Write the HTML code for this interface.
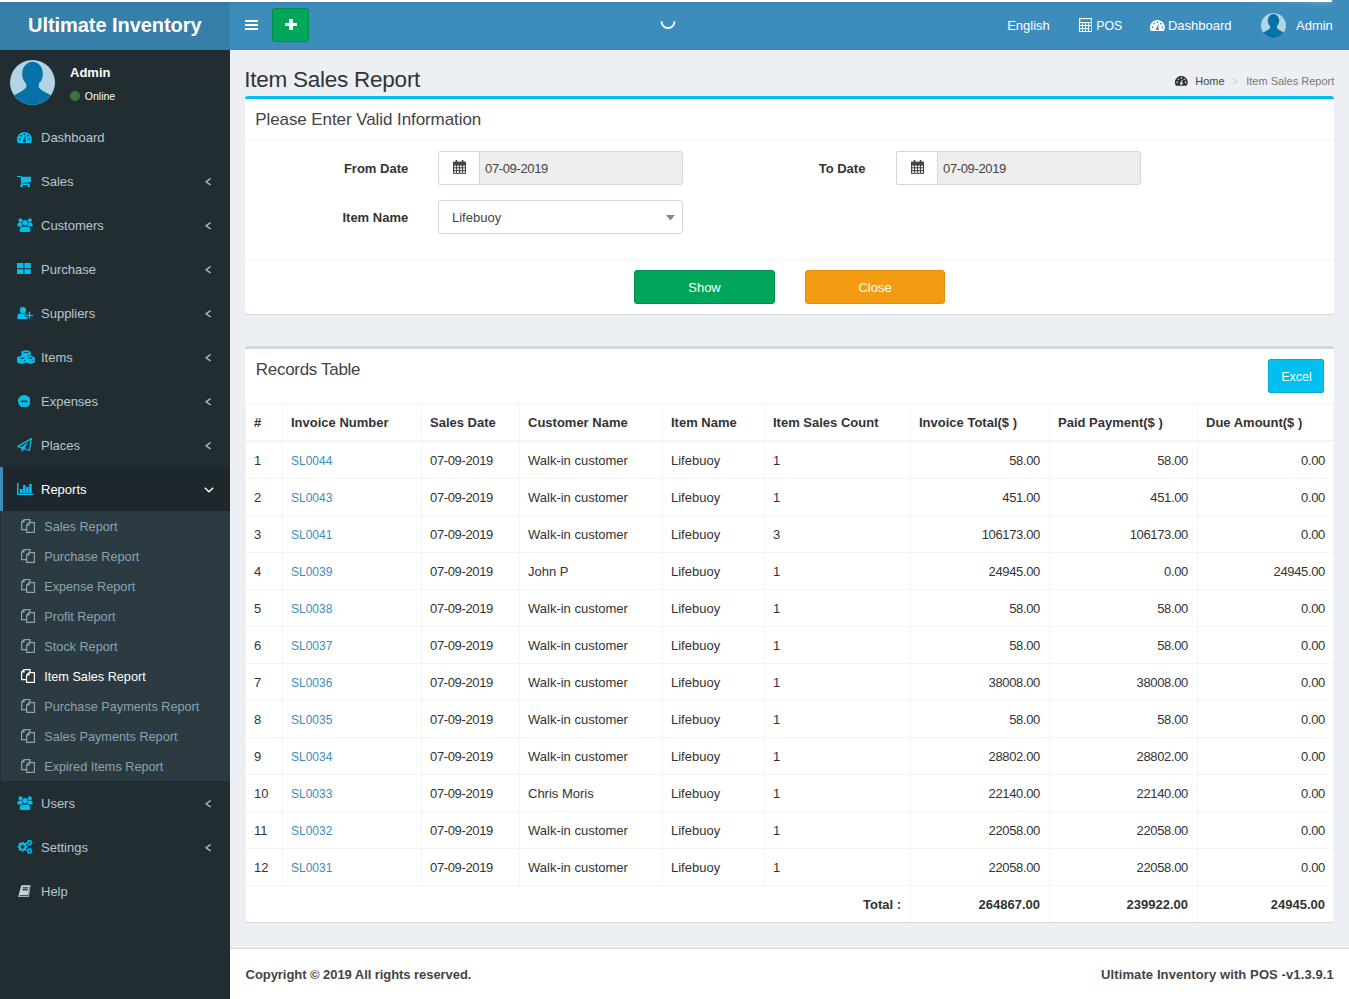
<!DOCTYPE html>
<html><head><meta charset="utf-8"><title>Item Sales Report</title>
<style>
html,body{margin:0;padding:0;width:1349px;height:999px;overflow:hidden;background:#ecf0f5;}
body{position:relative;font-family:"Liberation Sans",sans-serif;}
.t{position:absolute;white-space:nowrap;}
.r{position:absolute;display:block;}
</style></head><body>
<div class="r" style="left:230px;top:50px;width:1119px;height:898px;background:#ecf0f5;"></div>
<div class="r" style="left:0px;top:50px;width:230px;height:949px;background:#222d32;"></div>
<div class="r" style="left:0px;top:0px;width:230px;height:50px;background:#367fa9;"></div>
<div class="r" style="left:230px;top:0px;width:1119px;height:50px;background:#3c8dbc;"></div>
<div class="r" style="left:0px;top:0px;width:1332px;height:2px;background:#ffffff;box-shadow:0 0 4px rgba(40,90,130,.5);"></div>
<div class="r" style="left:1232px;top:0;width:100px;height:2px;box-shadow:0 0 10px #fff,0 0 5px #fff;opacity:.8;transform:rotate(3deg) translate(0,-4px)"></div>
<div class="t" style="left:28px;top:14.77px;font-size:20px;line-height:20px;color:#fff;font-weight:bold;letter-spacing:-0.05px;">Ultimate Inventory</div>
<div class="r" style="left:244.5px;top:20px;width:13.5px;height:2.2px;background:#fff;"></div>
<div class="r" style="left:244.5px;top:24px;width:13.5px;height:2.2px;background:#fff;"></div>
<div class="r" style="left:244.5px;top:28px;width:13.5px;height:2.2px;background:#fff;"></div>
<div class="r" style="left:272px;top:8px;width:35px;height:32px;background:#00a65a;border:1px solid #008d4c;border-radius:3px;"></div>
<div class="r" style="left:284.7px;top:22.8px;width:12px;height:3.6px;background:#fff;"></div>
<div class="r" style="left:289px;top:18.8px;width:3.6px;height:11.4px;background:#fff;"></div>
<svg class="r" style="left:658px;top:12px;" width="20" height="20" viewBox="0 0 20 20"><path d="M3.5 9.5 A6.5 6.5 0 0 0 16.5 9.5" fill="none" stroke="#fff" stroke-width="2"/></svg>
<div class="t" style="left:1007.2px;top:18.99px;font-size:13px;line-height:13px;color:#fff;">English</div>
<svg class="r" style="left:1078.8px;top:17.9px;" width="13.4" height="14.1" viewBox="0 0 13.4 14.1"><rect x="0" y="0" width="13.4" height="14.1" rx="0.8" fill="#fff"/><rect x="1.2" y="1.1" width="11" height="2.9" fill="#3c8dbc"/><rect x="1.1" y="5" width="2.1" height="2.1" fill="#3c8dbc"/><rect x="1.1" y="8" width="2.1" height="2.1" fill="#3c8dbc"/><rect x="1.1" y="11" width="2.1" height="2.1" fill="#3c8dbc"/><rect x="4.1" y="5" width="2.1" height="2.1" fill="#3c8dbc"/><rect x="4.1" y="8" width="2.1" height="2.1" fill="#3c8dbc"/><rect x="4.1" y="11" width="2.1" height="2.1" fill="#3c8dbc"/><rect x="7.1" y="5" width="2.1" height="2.1" fill="#3c8dbc"/><rect x="7.1" y="8" width="2.1" height="2.1" fill="#3c8dbc"/><rect x="7.1" y="11" width="2.1" height="2.1" fill="#3c8dbc"/><rect x="10.2" y="5" width="2.1" height="2.1" fill="#3c8dbc"/><rect x="10.2" y="8" width="2.1" height="5.1" fill="#3c8dbc"/></svg>
<div class="t" style="left:1096.3px;top:19.59px;font-size:12.3px;line-height:12.3px;color:#fff;">POS</div>
<svg class="r" style="left:1150px;top:19.8px;" width="14.8" height="11.4" viewBox="0 0 14.8 11.4"><path d="M1.1 11.3 A7.4 7.4 0 1 1 13.7 11.3 Z" fill="#fff"/><ellipse cx="7.4" cy="2.3" rx="0.75" ry="1.05" fill="#3c8dbc"/><ellipse cx="4" cy="3.8" rx="1.05" ry="0.7" fill="#3c8dbc"/><ellipse cx="10.9" cy="3.8" rx="1.05" ry="0.7" fill="#3c8dbc"/><ellipse cx="2.5" cy="7.3" rx="0.75" ry="1.05" fill="#3c8dbc"/><ellipse cx="12.4" cy="7.3" rx="0.75" ry="1.05" fill="#3c8dbc"/><path d="M8.4 4.7 L7.3 8.6" stroke="#3c8dbc" stroke-width="1.1"/><circle cx="7.4" cy="8.8" r="1.5" fill="#3c8dbc"/></svg>
<div class="t" style="left:1167.9px;top:18.99px;font-size:13px;line-height:13px;color:#fff;">Dashboard</div>
<svg class="r" style="left:1261px;top:13px;" width="25" height="25" viewBox="0 0 100 100"><circle cx="50" cy="50" r="50" fill="#b3d4e5"/><clipPath id="av1"><circle cx="50" cy="50" r="50"/></clipPath><g clip-path="url(#av1)" fill="#0672a8"><ellipse cx="50" cy="31" rx="23" ry="27"/><path d="M36 48 L36 61 Q28 70 11 77 L0 86 L0 110 L100 110 L100 86 L89 77 Q72 70 64 61 L64 48 Z"/></g></svg>
<div class="t" style="left:1296px;top:18.99px;font-size:13px;line-height:13px;color:#fff;">Admin</div>
<svg class="r" style="left:10px;top:60px;" width="45" height="45" viewBox="0 0 100 100"><circle cx="50" cy="50" r="50" fill="#b3d4e5"/><clipPath id="av2"><circle cx="50" cy="50" r="50"/></clipPath><g clip-path="url(#av2)" fill="#0672a8"><ellipse cx="50" cy="31" rx="23" ry="27"/><path d="M36 48 L36 61 Q28 70 11 77 L0 86 L0 110 L100 110 L100 86 L89 77 Q72 70 64 61 L64 48 Z"/></g></svg>
<div class="t" style="left:70px;top:65.99px;font-size:13px;line-height:13px;color:#fff;font-weight:bold;">Admin</div>
<div class="r" style="left:70px;top:91px;width:10px;height:10px;border-radius:50%;background:#3c763d"></div>
<div class="t" style="left:84.8px;top:91.11px;font-size:10.5px;line-height:10.5px;color:#fff;">Online</div>
<svg class="r" style="left:17.3px;top:131.7px;" width="14.8" height="11.4" viewBox="0 0 14.8 11.4"><path d="M1.1 11.3 A7.4 7.4 0 1 1 13.7 11.3 Z" fill="#00c0ef"/><ellipse cx="7.4" cy="2.3" rx="0.75" ry="1.05" fill="#222d32"/><ellipse cx="4" cy="3.8" rx="1.05" ry="0.7" fill="#222d32"/><ellipse cx="10.9" cy="3.8" rx="1.05" ry="0.7" fill="#222d32"/><ellipse cx="2.5" cy="7.3" rx="0.75" ry="1.05" fill="#222d32"/><ellipse cx="12.4" cy="7.3" rx="0.75" ry="1.05" fill="#222d32"/><path d="M8.4 4.7 L7.3 8.6" stroke="#222d32" stroke-width="1.1"/><circle cx="7.4" cy="8.8" r="1.5" fill="#222d32"/></svg>
<div class="t" style="left:41px;top:130.99px;font-size:13px;line-height:13px;color:#b8c7ce;">Dashboard</div>
<svg class="r" style="left:17.2px;top:176.2px;" width="14" height="11" viewBox="0 0 14 11"><path d="M0 0.3 L3.4 0.3 L4.4 1 L4.9 8" fill="none" stroke="#00c0ef" stroke-width="1.3"/><path d="M3.9 0.8 L14 0.8 L14 5.9 L4.7 6.9Z" fill="#00c0ef"/><rect x="4" y="7.6" width="8.8" height="1.4" fill="#00c0ef"/><rect x="3.4" y="8.6" width="2.4" height="2.4" fill="#00c0ef"/><rect x="10.5" y="8.6" width="2.3" height="2.4" fill="#00c0ef"/></svg>
<div class="t" style="left:41px;top:174.99px;font-size:13px;line-height:13px;color:#b8c7ce;">Sales</div>
<svg class="r" style="left:204.5px;top:177.6px;" width="7" height="8" viewBox="0 0 7 8"><path d="M5.6 0.5 L1.1 3.8 L5.6 7.1" fill="none" stroke="#b8c7ce" stroke-width="1.3"/></svg>
<svg class="r" style="left:17.2px;top:217.6px;" width="16" height="14.6" viewBox="0 0 16 14.6"><g transform="translate(0.2 0.2)"><circle cx="3.3" cy="2" r="2" fill="#00c0ef"/><circle cx="12.6" cy="2" r="2" fill="#00c0ef"/><path d="M0.2 8.3 L0.2 6.5 Q0.2 4.3 2.5 4.3 L4.8 4.3 Q4.6 6.5 5.8 8.3 Z" fill="#00c0ef"/><path d="M15.4 8.3 L15.4 6.5 Q15.4 4.3 13.1 4.3 L10.8 4.3 Q11 6.5 9.8 8.3 Z" fill="#00c0ef"/><path d="M2.4 14.2 L2.4 11 Q2.4 8.4 5 8.4 L10.6 8.4 Q13.2 8.4 13.2 11 L13.2 14.2 Z" fill="#00c0ef" stroke="#222d32" stroke-width="0.45"/><circle cx="7.8" cy="4.5" r="3.0" fill="#00c0ef" stroke="#222d32" stroke-width="0.45"/></g></svg>
<div class="t" style="left:41px;top:218.99px;font-size:13px;line-height:13px;color:#b8c7ce;">Customers</div>
<svg class="r" style="left:204.5px;top:221.6px;" width="7" height="8" viewBox="0 0 7 8"><path d="M5.6 0.5 L1.1 3.8 L5.6 7.1" fill="none" stroke="#b8c7ce" stroke-width="1.3"/></svg>
<svg class="r" style="left:17.4px;top:262.8px;" width="14" height="11.5" viewBox="0 0 14 11.5"><rect x="0" y="0" width="6.4" height="5.2" fill="#00c0ef"/><rect x="7.4" y="0" width="6.4" height="5.2" fill="#00c0ef"/><rect x="0" y="6.2" width="6.4" height="5.2" fill="#00c0ef"/><rect x="7.4" y="6.2" width="6.4" height="5.2" fill="#00c0ef"/></svg>
<div class="t" style="left:41px;top:262.99px;font-size:13px;line-height:13px;color:#b8c7ce;">Purchase</div>
<svg class="r" style="left:204.5px;top:265.6px;" width="7" height="8" viewBox="0 0 7 8"><path d="M5.6 0.5 L1.1 3.8 L5.6 7.1" fill="none" stroke="#b8c7ce" stroke-width="1.3"/></svg>
<svg class="r" style="left:17.4px;top:306.6px;" width="17" height="12.4" viewBox="0 0 17 12.4"><circle cx="6" cy="3.1" r="3.2" fill="#00c0ef"/><path d="M0.4 12.2 L0.4 8.8 Q0.4 6.4 2.8 6.4 L10.6 6.4 L10.6 12.2Z" fill="#00c0ef"/><path d="M11.4 4.4 L13.6 4.4 L13.6 7.4 L16.6 7.4 L16.6 9.4 L13.6 9.4 L13.6 12.1 L11.4 12.1 L11.4 9.4 L8.2 9.4 L8.2 7.4 L11.4 7.4Z" fill="#00c0ef" stroke="#222d32" stroke-width="0.8"/></svg>
<div class="t" style="left:41px;top:306.99px;font-size:13px;line-height:13px;color:#b8c7ce;">Suppliers</div>
<svg class="r" style="left:204.5px;top:309.6px;" width="7" height="8" viewBox="0 0 7 8"><path d="M5.6 0.5 L1.1 3.8 L5.6 7.1" fill="none" stroke="#b8c7ce" stroke-width="1.3"/></svg>
<svg class="r" style="left:17.3px;top:350px;" width="17.8" height="14" viewBox="0 0 17.8 14"><path d="M4.4 1.6 L9 0 L13.6 1.6 L13.6 6.2 L9 7.6 L4.4 6.2Z M0 7.2 L4.5 5.6 L9 7.2 L13.3 5.6 L17.8 7.2 L17.8 12.4 L13.3 14 L8.9 12.6 L4.5 14 L0 12.4Z" fill="#00c0ef"/><path d="M5.8 2.4 L9 1.7 L12.4 2.4 L9 3.1Z" fill="#222d32"/><path d="M2.8 7.6 L7.6 7.6 L6.6 8.8 L3.8 8.8Z M10.9 7.6 L15.6 7.6 L14.6 8.8 L11.9 8.8Z" fill="#222d32"/><path d="M7.6 9.6 Q6.4 10.8 6.8 12 Q7.6 11.2 8.1 10Z M15.5 9.6 Q14.4 10.8 14.8 12 Q15.6 11.2 16.1 10Z M11.8 4.6 Q10.4 5.4 10.2 6.6 Q11.4 6.2 12.2 5Z" fill="#222d32"/></svg>
<div class="t" style="left:41px;top:350.99px;font-size:13px;line-height:13px;color:#b8c7ce;">Items</div>
<svg class="r" style="left:204.5px;top:353.6px;" width="7" height="8" viewBox="0 0 7 8"><path d="M5.6 0.5 L1.1 3.8 L5.6 7.1" fill="none" stroke="#b8c7ce" stroke-width="1.3"/></svg>
<svg class="r" style="left:17.5px;top:394.7px;" width="12.6" height="12.6" viewBox="0 0 12.6 12.6"><circle cx="6.3" cy="6.3" r="6.3" fill="#00c0ef"/><rect x="3.1" y="5.5" width="6.4" height="1.7" fill="#222d32"/></svg>
<div class="t" style="left:41px;top:394.99px;font-size:13px;line-height:13px;color:#b8c7ce;">Expenses</div>
<svg class="r" style="left:204.5px;top:397.6px;" width="7" height="8" viewBox="0 0 7 8"><path d="M5.6 0.5 L1.1 3.8 L5.6 7.1" fill="none" stroke="#b8c7ce" stroke-width="1.3"/></svg>
<svg class="r" style="left:17.4px;top:437.8px;" width="15" height="14.2" viewBox="0 0 15 14.2"><path d="M14.4 0.6 L0.8 8.4 L4.6 9.9 M14.4 0.6 L12.4 12.5 L7.2 10.5" fill="none" stroke="#00c0ef" stroke-width="1.25" stroke-linejoin="round" stroke-linecap="round"/><path d="M4 9.3 L11.4 4 L7.4 10.6 L4.9 13.9 Z" fill="#00c0ef"/></svg>
<div class="t" style="left:41px;top:438.99px;font-size:13px;line-height:13px;color:#b8c7ce;">Places</div>
<svg class="r" style="left:204.5px;top:441.6px;" width="7" height="8" viewBox="0 0 7 8"><path d="M5.6 0.5 L1.1 3.8 L5.6 7.1" fill="none" stroke="#b8c7ce" stroke-width="1.3"/></svg>
<div class="r" style="left:0px;top:467px;width:230px;height:44px;background:#1e282c;"></div>
<div class="r" style="left:0px;top:467px;width:3px;height:44px;background:#3c8dbc;"></div>
<svg class="r" style="left:17.4px;top:482.8px;" width="17" height="12.4" viewBox="0 0 17 12.4"><path d="M0.8 0 L0.8 11.5 L16.8 11.5" fill="none" stroke="#00c0ef" stroke-width="1.5"/><rect x="3" y="6" width="2.6" height="4.3" fill="#00c0ef"/><rect x="6.1" y="2" width="2.5" height="8.3" fill="#00c0ef"/><rect x="9.2" y="4" width="2.5" height="6.3" fill="#00c0ef"/><rect x="12.2" y="1" width="2.5" height="9.3" fill="#00c0ef"/></svg>
<div class="t" style="left:41px;top:482.99px;font-size:13px;line-height:13px;color:#fff;">Reports</div>
<svg class="r" style="left:203.5px;top:486.6px;" width="10" height="6" viewBox="0 0 10 6"><path d="M0.8 0.8 L5 4.8 L9.2 0.8" fill="none" stroke="#fff" stroke-width="1.4"/></svg>
<svg class="r" style="left:17.2px;top:795.6px;" width="16" height="14.6" viewBox="0 0 16 14.6"><g transform="translate(0.2 0.2)"><circle cx="3.3" cy="2" r="2" fill="#00c0ef"/><circle cx="12.6" cy="2" r="2" fill="#00c0ef"/><path d="M0.2 8.3 L0.2 6.5 Q0.2 4.3 2.5 4.3 L4.8 4.3 Q4.6 6.5 5.8 8.3 Z" fill="#00c0ef"/><path d="M15.4 8.3 L15.4 6.5 Q15.4 4.3 13.1 4.3 L10.8 4.3 Q11 6.5 9.8 8.3 Z" fill="#00c0ef"/><path d="M2.4 14.2 L2.4 11 Q2.4 8.4 5 8.4 L10.6 8.4 Q13.2 8.4 13.2 11 L13.2 14.2 Z" fill="#00c0ef" stroke="#222d32" stroke-width="0.45"/><circle cx="7.8" cy="4.5" r="3.0" fill="#00c0ef" stroke="#222d32" stroke-width="0.45"/></g></svg>
<div class="t" style="left:41px;top:796.99px;font-size:13px;line-height:13px;color:#b8c7ce;">Users</div>
<svg class="r" style="left:204.5px;top:799.6px;" width="7" height="8" viewBox="0 0 7 8"><path d="M5.6 0.5 L1.1 3.8 L5.6 7.1" fill="none" stroke="#b8c7ce" stroke-width="1.3"/></svg>
<svg class="r" style="left:17.4px;top:840.2px;" width="16.6" height="14" viewBox="0 0 16.6 14"><path fill-rule="evenodd" d="M9.46 5.63 L10.62 5.82 L10.62 7.58 L9.46 7.77 L9.08 8.67 L9.77 9.63 L8.53 10.87 L7.57 10.18 L6.67 10.56 L6.48 11.72 L4.72 11.72 L4.53 10.56 L3.63 10.18 L2.67 10.87 L1.43 9.63 L2.12 8.67 L1.74 7.77 L0.58 7.58 L0.58 5.82 L1.74 5.63 L2.12 4.73 L1.43 3.77 L2.67 2.53 L3.63 3.22 L4.53 2.84 L4.72 1.68 L6.48 1.68 L6.67 2.84 L7.57 3.22 L8.53 2.53 L9.77 3.77 L9.08 4.73Z M7.55 6.70 A1.95 1.95 0 1 0 3.65 6.70 A1.95 1.95 0 1 0 7.55 6.70Z M14.65 1.89 L15.52 1.99 L15.52 3.41 L14.65 3.51 L14.28 4.16 L14.62 4.96 L13.40 5.67 L12.87 4.97 L12.13 4.97 L11.60 5.67 L10.38 4.96 L10.72 4.16 L10.35 3.51 L9.48 3.41 L9.48 1.99 L10.35 1.89 L10.72 1.24 L10.38 0.44 L11.60 -0.27 L12.13 0.43 L12.87 0.43 L13.40 -0.27 L14.62 0.44 L14.28 1.24Z M13.50 2.70 A1.0 1.0 0 1 0 11.50 2.70 A1.0 1.0 0 1 0 13.50 2.70Z M14.65 10.09 L15.52 10.19 L15.52 11.61 L14.65 11.71 L14.28 12.36 L14.62 13.16 L13.40 13.87 L12.87 13.17 L12.13 13.17 L11.60 13.87 L10.38 13.16 L10.72 12.36 L10.35 11.71 L9.48 11.61 L9.48 10.19 L10.35 10.09 L10.72 9.44 L10.38 8.64 L11.60 7.93 L12.13 8.63 L12.87 8.63 L13.40 7.93 L14.62 8.64 L14.28 9.44Z M13.50 10.90 A1.0 1.0 0 1 0 11.50 10.90 A1.0 1.0 0 1 0 13.50 10.90Z" fill="#00c0ef"/></svg>
<div class="t" style="left:41px;top:840.99px;font-size:13px;line-height:13px;color:#b8c7ce;">Settings</div>
<svg class="r" style="left:204.5px;top:843.6px;" width="7" height="8" viewBox="0 0 7 8"><path d="M5.6 0.5 L1.1 3.8 L5.6 7.1" fill="none" stroke="#b8c7ce" stroke-width="1.3"/></svg>
<svg class="r" style="left:17.7px;top:884.7px;" width="13.2" height="12.6" viewBox="0 0 13.2 12.6"><path d="M3.3 0.2 L12.6 0.2 L10.9 12.5 L0.5 12.5 L0.3 11.4 Z" fill="#c9d4da"/><path d="M4.7 2.9 L10.2 2.9 M4.4 4.9 L9.6 4.9 M1.7 10.8 L10.2 10.8" stroke="#222d32" stroke-width="1.1"/><path d="M11.7 1.4 L10.2 11.4" stroke="#3a4a52" stroke-width="0.6"/></svg>
<div class="t" style="left:41px;top:884.99px;font-size:13px;line-height:13px;color:#b8c7ce;">Help</div>
<div class="r" style="left:1px;top:511px;width:229px;height:270px;background:#2c3b41;"></div>
<svg class="r" style="left:21px;top:519px;" width="14" height="14" viewBox="0 0 14 14"><path d="M3 0.6 L9 0.6 L9 3.2 M5.4 10.6 L0.6 10.6 L0.6 3 L3 0.6 L3 3 L0.6 3" fill="none" stroke="#8aa4af" stroke-width="1.2"/><path d="M8 3.6 L13.4 3.6 L13.4 13.4 L5.6 13.4 L5.6 6 L8 3.6 L8 6 L5.6 6" fill="none" stroke="#8aa4af" stroke-width="1.2"/></svg>
<div class="t" style="left:44.2px;top:520.55px;font-size:12.7px;line-height:12.7px;color:#8aa4af;">Sales Report</div>
<svg class="r" style="left:21px;top:549px;" width="14" height="14" viewBox="0 0 14 14"><path d="M3 0.6 L9 0.6 L9 3.2 M5.4 10.6 L0.6 10.6 L0.6 3 L3 0.6 L3 3 L0.6 3" fill="none" stroke="#8aa4af" stroke-width="1.2"/><path d="M8 3.6 L13.4 3.6 L13.4 13.4 L5.6 13.4 L5.6 6 L8 3.6 L8 6 L5.6 6" fill="none" stroke="#8aa4af" stroke-width="1.2"/></svg>
<div class="t" style="left:44.2px;top:550.55px;font-size:12.7px;line-height:12.7px;color:#8aa4af;">Purchase Report</div>
<svg class="r" style="left:21px;top:579px;" width="14" height="14" viewBox="0 0 14 14"><path d="M3 0.6 L9 0.6 L9 3.2 M5.4 10.6 L0.6 10.6 L0.6 3 L3 0.6 L3 3 L0.6 3" fill="none" stroke="#8aa4af" stroke-width="1.2"/><path d="M8 3.6 L13.4 3.6 L13.4 13.4 L5.6 13.4 L5.6 6 L8 3.6 L8 6 L5.6 6" fill="none" stroke="#8aa4af" stroke-width="1.2"/></svg>
<div class="t" style="left:44.2px;top:580.55px;font-size:12.7px;line-height:12.7px;color:#8aa4af;">Expense Report</div>
<svg class="r" style="left:21px;top:609px;" width="14" height="14" viewBox="0 0 14 14"><path d="M3 0.6 L9 0.6 L9 3.2 M5.4 10.6 L0.6 10.6 L0.6 3 L3 0.6 L3 3 L0.6 3" fill="none" stroke="#8aa4af" stroke-width="1.2"/><path d="M8 3.6 L13.4 3.6 L13.4 13.4 L5.6 13.4 L5.6 6 L8 3.6 L8 6 L5.6 6" fill="none" stroke="#8aa4af" stroke-width="1.2"/></svg>
<div class="t" style="left:44.2px;top:610.55px;font-size:12.7px;line-height:12.7px;color:#8aa4af;">Profit Report</div>
<svg class="r" style="left:21px;top:639px;" width="14" height="14" viewBox="0 0 14 14"><path d="M3 0.6 L9 0.6 L9 3.2 M5.4 10.6 L0.6 10.6 L0.6 3 L3 0.6 L3 3 L0.6 3" fill="none" stroke="#8aa4af" stroke-width="1.2"/><path d="M8 3.6 L13.4 3.6 L13.4 13.4 L5.6 13.4 L5.6 6 L8 3.6 L8 6 L5.6 6" fill="none" stroke="#8aa4af" stroke-width="1.2"/></svg>
<div class="t" style="left:44.2px;top:640.55px;font-size:12.7px;line-height:12.7px;color:#8aa4af;">Stock Report</div>
<svg class="r" style="left:21px;top:669px;" width="14" height="14" viewBox="0 0 14 14"><path d="M3 0.6 L9 0.6 L9 3.2 M5.4 10.6 L0.6 10.6 L0.6 3 L3 0.6 L3 3 L0.6 3" fill="none" stroke="#fff" stroke-width="1.2"/><path d="M8 3.6 L13.4 3.6 L13.4 13.4 L5.6 13.4 L5.6 6 L8 3.6 L8 6 L5.6 6" fill="none" stroke="#fff" stroke-width="1.2"/></svg>
<div class="t" style="left:44.2px;top:670.55px;font-size:12.7px;line-height:12.7px;color:#fff;">Item Sales Report</div>
<svg class="r" style="left:21px;top:699px;" width="14" height="14" viewBox="0 0 14 14"><path d="M3 0.6 L9 0.6 L9 3.2 M5.4 10.6 L0.6 10.6 L0.6 3 L3 0.6 L3 3 L0.6 3" fill="none" stroke="#8aa4af" stroke-width="1.2"/><path d="M8 3.6 L13.4 3.6 L13.4 13.4 L5.6 13.4 L5.6 6 L8 3.6 L8 6 L5.6 6" fill="none" stroke="#8aa4af" stroke-width="1.2"/></svg>
<div class="t" style="left:44.2px;top:700.55px;font-size:12.7px;line-height:12.7px;color:#8aa4af;">Purchase Payments Report</div>
<svg class="r" style="left:21px;top:729px;" width="14" height="14" viewBox="0 0 14 14"><path d="M3 0.6 L9 0.6 L9 3.2 M5.4 10.6 L0.6 10.6 L0.6 3 L3 0.6 L3 3 L0.6 3" fill="none" stroke="#8aa4af" stroke-width="1.2"/><path d="M8 3.6 L13.4 3.6 L13.4 13.4 L5.6 13.4 L5.6 6 L8 3.6 L8 6 L5.6 6" fill="none" stroke="#8aa4af" stroke-width="1.2"/></svg>
<div class="t" style="left:44.2px;top:730.55px;font-size:12.7px;line-height:12.7px;color:#8aa4af;">Sales Payments Report</div>
<svg class="r" style="left:21px;top:759px;" width="14" height="14" viewBox="0 0 14 14"><path d="M3 0.6 L9 0.6 L9 3.2 M5.4 10.6 L0.6 10.6 L0.6 3 L3 0.6 L3 3 L0.6 3" fill="none" stroke="#8aa4af" stroke-width="1.2"/><path d="M8 3.6 L13.4 3.6 L13.4 13.4 L5.6 13.4 L5.6 6 L8 3.6 L8 6 L5.6 6" fill="none" stroke="#8aa4af" stroke-width="1.2"/></svg>
<div class="t" style="left:44.2px;top:760.55px;font-size:12.7px;line-height:12.7px;color:#8aa4af;">Expired Items Report</div>
<div class="t" style="left:244.3px;top:68.95px;font-size:22.5px;line-height:22.5px;color:#333;letter-spacing:-0.25px;">Item Sales Report</div>
<svg class="r" style="left:1175px;top:75.9px;" width="12.6" height="9.8" viewBox="0 0 14.8 11.4"><path d="M1.1 11.3 A7.4 7.4 0 1 1 13.7 11.3 Z" fill="#333"/><ellipse cx="7.4" cy="2.3" rx="0.75" ry="1.05" fill="#ecf0f5"/><ellipse cx="4" cy="3.8" rx="1.05" ry="0.7" fill="#ecf0f5"/><ellipse cx="10.9" cy="3.8" rx="1.05" ry="0.7" fill="#ecf0f5"/><ellipse cx="2.5" cy="7.3" rx="0.75" ry="1.05" fill="#ecf0f5"/><ellipse cx="12.4" cy="7.3" rx="0.75" ry="1.05" fill="#ecf0f5"/><path d="M8.4 4.7 L7.3 8.6" stroke="#ecf0f5" stroke-width="1.1"/><circle cx="7.4" cy="8.8" r="1.5" fill="#ecf0f5"/></svg>
<div class="t" style="left:1195.3px;top:75.69px;font-size:11px;line-height:11px;color:#444;">Home</div>
<div class="t" style="left:1232.4px;top:76.53px;font-size:10px;line-height:10px;color:#ccc;">&gt;</div>
<div class="t" style="left:1246.2px;top:75.69px;font-size:11px;line-height:11px;color:#777;">Item Sales Report</div>
<div class="r" style="left:245px;top:96px;width:1089px;height:218px;background:#fff;border-top:3px solid #00c0ef;border-radius:3px;box-shadow:0 1px 1px rgba(0,0,0,.1);box-sizing:border-box"></div>
<div class="t" style="left:255.2px;top:110.61px;font-size:17px;line-height:17px;color:#444;letter-spacing:-0.08px;">Please Enter Valid Information</div>
<div class="r" style="left:245px;top:140px;width:1089px;height:1px;background:#f4f4f4;"></div>
<div class="r" style="left:245px;top:259px;width:1089px;height:1px;background:#f4f4f4;"></div>
<div class="t" style="left:-191.8px;width:600px;text-align:right;top:162.29px;font-size:13px;line-height:13px;color:#333;font-weight:bold;">From Date</div>
<div class="r" style="left:438px;top:151px;width:245px;height:34px;box-sizing:border-box;border:1px solid #d2d6de;border-radius:3px;background:#eee"></div>
<div class="r" style="left:438px;top:151px;width:42px;height:34px;box-sizing:border-box;border:1px solid #d2d6de;border-radius:3px 0 0 3px;background:#fff"></div>
<svg class="r" style="left:452.6px;top:159.7px;" width="13" height="14" viewBox="0 0 13 14"><rect x="0" y="1.6" width="13" height="12.2" fill="#444"/><rect x="1.20" y="5.60" width="1.9" height="1.7" fill="#fff"/><rect x="1.20" y="8.35" width="1.9" height="1.7" fill="#fff"/><rect x="1.20" y="11.10" width="1.9" height="1.7" fill="#fff"/><rect x="4.15" y="5.60" width="1.9" height="1.7" fill="#fff"/><rect x="4.15" y="8.35" width="1.9" height="1.7" fill="#fff"/><rect x="4.15" y="11.10" width="1.9" height="1.7" fill="#fff"/><rect x="7.10" y="5.60" width="1.9" height="1.7" fill="#fff"/><rect x="7.10" y="8.35" width="1.9" height="1.7" fill="#fff"/><rect x="7.10" y="11.10" width="1.9" height="1.7" fill="#fff"/><rect x="10.05" y="5.60" width="1.9" height="1.7" fill="#fff"/><rect x="10.05" y="8.35" width="1.9" height="1.7" fill="#fff"/><rect x="10.05" y="11.10" width="1.9" height="1.7" fill="#fff"/><rect x="2.6" y="0" width="1.6" height="3.6" fill="#444"/><rect x="8.8" y="0" width="1.6" height="3.6" fill="#444"/></svg>
<div class="t" style="left:485px;top:161.99px;font-size:13px;line-height:13px;color:#444;letter-spacing:-0.35px;">07-09-2019</div>
<div class="t" style="left:265.4px;width:600px;text-align:right;top:162.29px;font-size:13px;line-height:13px;color:#333;font-weight:bold;">To Date</div>
<div class="r" style="left:896px;top:151px;width:245px;height:34px;box-sizing:border-box;border:1px solid #d2d6de;border-radius:3px;background:#eee"></div>
<div class="r" style="left:896px;top:151px;width:42px;height:34px;box-sizing:border-box;border:1px solid #d2d6de;border-radius:3px 0 0 3px;background:#fff"></div>
<svg class="r" style="left:910.6px;top:159.7px;" width="13" height="14" viewBox="0 0 13 14"><rect x="0" y="1.6" width="13" height="12.2" fill="#444"/><rect x="1.20" y="5.60" width="1.9" height="1.7" fill="#fff"/><rect x="1.20" y="8.35" width="1.9" height="1.7" fill="#fff"/><rect x="1.20" y="11.10" width="1.9" height="1.7" fill="#fff"/><rect x="4.15" y="5.60" width="1.9" height="1.7" fill="#fff"/><rect x="4.15" y="8.35" width="1.9" height="1.7" fill="#fff"/><rect x="4.15" y="11.10" width="1.9" height="1.7" fill="#fff"/><rect x="7.10" y="5.60" width="1.9" height="1.7" fill="#fff"/><rect x="7.10" y="8.35" width="1.9" height="1.7" fill="#fff"/><rect x="7.10" y="11.10" width="1.9" height="1.7" fill="#fff"/><rect x="10.05" y="5.60" width="1.9" height="1.7" fill="#fff"/><rect x="10.05" y="8.35" width="1.9" height="1.7" fill="#fff"/><rect x="10.05" y="11.10" width="1.9" height="1.7" fill="#fff"/><rect x="2.6" y="0" width="1.6" height="3.6" fill="#444"/><rect x="8.8" y="0" width="1.6" height="3.6" fill="#444"/></svg>
<div class="t" style="left:943px;top:161.99px;font-size:13px;line-height:13px;color:#444;letter-spacing:-0.35px;">07-09-2019</div>
<div class="t" style="left:-191.8px;width:600px;text-align:right;top:211.29px;font-size:13px;line-height:13px;color:#333;font-weight:bold;">Item Name</div>
<div class="r" style="left:438px;top:200px;width:245px;height:34px;box-sizing:border-box;border:1px solid #d2d6de;border-radius:3px;background:#fff"></div>
<div class="t" style="left:452px;top:210.99px;font-size:13px;line-height:13px;color:#444;">Lifebuoy</div>
<svg class="r" style="left:665.5px;top:215px;" width="9" height="6" viewBox="0 0 9 6"><path d="M0 0 L9 0 L4.5 5.5Z" fill="#888"/></svg>
<div class="r" style="left:634px;top:270px;width:141px;height:34px;box-sizing:border-box;border:1px solid #008d4c;border-radius:3px;background:#00a65a"></div>
<div class="t" style="left:404.5px;width:600px;text-align:center;top:280.99px;font-size:13px;line-height:13px;color:#fff;">Show</div>
<div class="r" style="left:805px;top:270px;width:140px;height:34px;box-sizing:border-box;border:1px solid #e08e0b;border-radius:3px;background:#f39c12"></div>
<div class="t" style="left:575px;width:600px;text-align:center;top:280.99px;font-size:13px;line-height:13px;color:#fff;">Close</div>
<div class="r" style="left:245px;top:346px;width:1089px;height:576px;background:#fff;border-top:3px solid #d2d6de;border-radius:3px;box-shadow:0 1px 1px rgba(0,0,0,.1);box-sizing:border-box"></div>
<div class="t" style="left:255.8px;top:360.81px;font-size:17px;line-height:17px;color:#444;letter-spacing:-0.3px;">Records Table</div>
<div class="r" style="left:1268px;top:359px;width:56px;height:34px;box-sizing:border-box;border:1px solid #00acd6;border-radius:2px;background:#00c0ef"></div>
<div class="t" style="left:996.5px;width:600px;text-align:center;top:371.42px;font-size:12.5px;line-height:12.5px;color:#fff;">Excel</div>
<div class="r" style="left:245px;top:403px;width:1089px;height:1px;background:#f4f4f4;"></div>
<div class="r" style="left:245px;top:440px;width:1089px;height:2px;background:#f4f4f4;"></div>
<div class="r" style="left:245px;top:478px;width:1089px;height:1px;background:#f4f4f4;"></div>
<div class="r" style="left:245px;top:515px;width:1089px;height:1px;background:#f4f4f4;"></div>
<div class="r" style="left:245px;top:552px;width:1089px;height:1px;background:#f4f4f4;"></div>
<div class="r" style="left:245px;top:589px;width:1089px;height:1px;background:#f4f4f4;"></div>
<div class="r" style="left:245px;top:626px;width:1089px;height:1px;background:#f4f4f4;"></div>
<div class="r" style="left:245px;top:663px;width:1089px;height:1px;background:#f4f4f4;"></div>
<div class="r" style="left:245px;top:700px;width:1089px;height:1px;background:#f4f4f4;"></div>
<div class="r" style="left:245px;top:737px;width:1089px;height:1px;background:#f4f4f4;"></div>
<div class="r" style="left:245px;top:774px;width:1089px;height:1px;background:#f4f4f4;"></div>
<div class="r" style="left:245px;top:811px;width:1089px;height:1px;background:#f4f4f4;"></div>
<div class="r" style="left:245px;top:848px;width:1089px;height:1px;background:#f4f4f4;"></div>
<div class="r" style="left:245px;top:885px;width:1089px;height:1px;background:#f4f4f4;"></div>
<div class="r" style="left:282px;top:403px;width:1px;height:482px;background:#f4f4f4;"></div>
<div class="r" style="left:421px;top:403px;width:1px;height:482px;background:#f4f4f4;"></div>
<div class="r" style="left:519px;top:403px;width:1px;height:482px;background:#f4f4f4;"></div>
<div class="r" style="left:662px;top:403px;width:1px;height:482px;background:#f4f4f4;"></div>
<div class="r" style="left:764px;top:403px;width:1px;height:482px;background:#f4f4f4;"></div>
<div class="r" style="left:910px;top:403px;width:1px;height:482px;background:#f4f4f4;"></div>
<div class="r" style="left:1049px;top:403px;width:1px;height:482px;background:#f4f4f4;"></div>
<div class="r" style="left:1197px;top:403px;width:1px;height:482px;background:#f4f4f4;"></div>
<div class="r" style="left:910px;top:885px;width:1px;height:37px;background:#f4f4f4;"></div>
<div class="r" style="left:1049px;top:885px;width:1px;height:37px;background:#f4f4f4;"></div>
<div class="r" style="left:1197px;top:885px;width:1px;height:37px;background:#f4f4f4;"></div>
<div class="r" style="left:245px;top:403px;width:1px;height:519px;background:#f4f4f4;"></div>
<div class="r" style="left:1333px;top:403px;width:1px;height:519px;background:#f4f4f4;"></div>
<div class="t" style="left:254px;top:416.19px;font-size:13px;line-height:13px;color:#333;font-weight:bold;">#</div>
<div class="t" style="left:291px;top:416.19px;font-size:13px;line-height:13px;color:#333;font-weight:bold;">Invoice Number</div>
<div class="t" style="left:430px;top:416.19px;font-size:13px;line-height:13px;color:#333;font-weight:bold;">Sales Date</div>
<div class="t" style="left:528px;top:416.19px;font-size:13px;line-height:13px;color:#333;font-weight:bold;">Customer Name</div>
<div class="t" style="left:671px;top:416.19px;font-size:13px;line-height:13px;color:#333;font-weight:bold;">Item Name</div>
<div class="t" style="left:773px;top:416.19px;font-size:13px;line-height:13px;color:#333;font-weight:bold;">Item Sales Count</div>
<div class="t" style="left:919px;top:416.19px;font-size:13px;line-height:13px;color:#333;font-weight:bold;">Invoice Total($ )</div>
<div class="t" style="left:1058px;top:416.19px;font-size:13px;line-height:13px;color:#333;font-weight:bold;">Paid Payment($ )</div>
<div class="t" style="left:1206px;top:416.19px;font-size:13px;line-height:13px;color:#333;font-weight:bold;">Due Amount($ )</div>
<div class="t" style="left:254px;top:453.99px;font-size:13px;line-height:13px;color:#333;">1</div>
<div class="t" style="left:291px;top:454.84px;font-size:12px;line-height:12px;color:#3c8dbc;">SL0044</div>
<div class="t" style="left:430px;top:453.99px;font-size:13px;line-height:13px;color:#333;letter-spacing:-0.35px;">07-09-2019</div>
<div class="t" style="left:528px;top:453.99px;font-size:13px;line-height:13px;color:#333;">Walk-in customer</div>
<div class="t" style="left:671px;top:453.99px;font-size:13px;line-height:13px;color:#333;">Lifebuoy</div>
<div class="t" style="left:773px;top:453.99px;font-size:13px;line-height:13px;color:#333;">1</div>
<div class="t" style="left:440px;width:600px;text-align:right;top:453.99px;font-size:13px;line-height:13px;color:#333;letter-spacing:-0.35px;">58.00</div>
<div class="t" style="left:588px;width:600px;text-align:right;top:453.99px;font-size:13px;line-height:13px;color:#333;letter-spacing:-0.35px;">58.00</div>
<div class="t" style="left:725px;width:600px;text-align:right;top:453.99px;font-size:13px;line-height:13px;color:#333;letter-spacing:-0.35px;">0.00</div>
<div class="t" style="left:254px;top:490.99px;font-size:13px;line-height:13px;color:#333;">2</div>
<div class="t" style="left:291px;top:491.84px;font-size:12px;line-height:12px;color:#3c8dbc;">SL0043</div>
<div class="t" style="left:430px;top:490.99px;font-size:13px;line-height:13px;color:#333;letter-spacing:-0.35px;">07-09-2019</div>
<div class="t" style="left:528px;top:490.99px;font-size:13px;line-height:13px;color:#333;">Walk-in customer</div>
<div class="t" style="left:671px;top:490.99px;font-size:13px;line-height:13px;color:#333;">Lifebuoy</div>
<div class="t" style="left:773px;top:490.99px;font-size:13px;line-height:13px;color:#333;">1</div>
<div class="t" style="left:440px;width:600px;text-align:right;top:490.99px;font-size:13px;line-height:13px;color:#333;letter-spacing:-0.35px;">451.00</div>
<div class="t" style="left:588px;width:600px;text-align:right;top:490.99px;font-size:13px;line-height:13px;color:#333;letter-spacing:-0.35px;">451.00</div>
<div class="t" style="left:725px;width:600px;text-align:right;top:490.99px;font-size:13px;line-height:13px;color:#333;letter-spacing:-0.35px;">0.00</div>
<div class="t" style="left:254px;top:527.99px;font-size:13px;line-height:13px;color:#333;">3</div>
<div class="t" style="left:291px;top:528.84px;font-size:12px;line-height:12px;color:#3c8dbc;">SL0041</div>
<div class="t" style="left:430px;top:527.99px;font-size:13px;line-height:13px;color:#333;letter-spacing:-0.35px;">07-09-2019</div>
<div class="t" style="left:528px;top:527.99px;font-size:13px;line-height:13px;color:#333;">Walk-in customer</div>
<div class="t" style="left:671px;top:527.99px;font-size:13px;line-height:13px;color:#333;">Lifebuoy</div>
<div class="t" style="left:773px;top:527.99px;font-size:13px;line-height:13px;color:#333;">3</div>
<div class="t" style="left:440px;width:600px;text-align:right;top:527.99px;font-size:13px;line-height:13px;color:#333;letter-spacing:-0.35px;">106173.00</div>
<div class="t" style="left:588px;width:600px;text-align:right;top:527.99px;font-size:13px;line-height:13px;color:#333;letter-spacing:-0.35px;">106173.00</div>
<div class="t" style="left:725px;width:600px;text-align:right;top:527.99px;font-size:13px;line-height:13px;color:#333;letter-spacing:-0.35px;">0.00</div>
<div class="t" style="left:254px;top:564.99px;font-size:13px;line-height:13px;color:#333;">4</div>
<div class="t" style="left:291px;top:565.84px;font-size:12px;line-height:12px;color:#3c8dbc;">SL0039</div>
<div class="t" style="left:430px;top:564.99px;font-size:13px;line-height:13px;color:#333;letter-spacing:-0.35px;">07-09-2019</div>
<div class="t" style="left:528px;top:564.99px;font-size:13px;line-height:13px;color:#333;">John P</div>
<div class="t" style="left:671px;top:564.99px;font-size:13px;line-height:13px;color:#333;">Lifebuoy</div>
<div class="t" style="left:773px;top:564.99px;font-size:13px;line-height:13px;color:#333;">1</div>
<div class="t" style="left:440px;width:600px;text-align:right;top:564.99px;font-size:13px;line-height:13px;color:#333;letter-spacing:-0.35px;">24945.00</div>
<div class="t" style="left:588px;width:600px;text-align:right;top:564.99px;font-size:13px;line-height:13px;color:#333;letter-spacing:-0.35px;">0.00</div>
<div class="t" style="left:725px;width:600px;text-align:right;top:564.99px;font-size:13px;line-height:13px;color:#333;letter-spacing:-0.35px;">24945.00</div>
<div class="t" style="left:254px;top:601.99px;font-size:13px;line-height:13px;color:#333;">5</div>
<div class="t" style="left:291px;top:602.84px;font-size:12px;line-height:12px;color:#3c8dbc;">SL0038</div>
<div class="t" style="left:430px;top:601.99px;font-size:13px;line-height:13px;color:#333;letter-spacing:-0.35px;">07-09-2019</div>
<div class="t" style="left:528px;top:601.99px;font-size:13px;line-height:13px;color:#333;">Walk-in customer</div>
<div class="t" style="left:671px;top:601.99px;font-size:13px;line-height:13px;color:#333;">Lifebuoy</div>
<div class="t" style="left:773px;top:601.99px;font-size:13px;line-height:13px;color:#333;">1</div>
<div class="t" style="left:440px;width:600px;text-align:right;top:601.99px;font-size:13px;line-height:13px;color:#333;letter-spacing:-0.35px;">58.00</div>
<div class="t" style="left:588px;width:600px;text-align:right;top:601.99px;font-size:13px;line-height:13px;color:#333;letter-spacing:-0.35px;">58.00</div>
<div class="t" style="left:725px;width:600px;text-align:right;top:601.99px;font-size:13px;line-height:13px;color:#333;letter-spacing:-0.35px;">0.00</div>
<div class="t" style="left:254px;top:638.99px;font-size:13px;line-height:13px;color:#333;">6</div>
<div class="t" style="left:291px;top:639.84px;font-size:12px;line-height:12px;color:#3c8dbc;">SL0037</div>
<div class="t" style="left:430px;top:638.99px;font-size:13px;line-height:13px;color:#333;letter-spacing:-0.35px;">07-09-2019</div>
<div class="t" style="left:528px;top:638.99px;font-size:13px;line-height:13px;color:#333;">Walk-in customer</div>
<div class="t" style="left:671px;top:638.99px;font-size:13px;line-height:13px;color:#333;">Lifebuoy</div>
<div class="t" style="left:773px;top:638.99px;font-size:13px;line-height:13px;color:#333;">1</div>
<div class="t" style="left:440px;width:600px;text-align:right;top:638.99px;font-size:13px;line-height:13px;color:#333;letter-spacing:-0.35px;">58.00</div>
<div class="t" style="left:588px;width:600px;text-align:right;top:638.99px;font-size:13px;line-height:13px;color:#333;letter-spacing:-0.35px;">58.00</div>
<div class="t" style="left:725px;width:600px;text-align:right;top:638.99px;font-size:13px;line-height:13px;color:#333;letter-spacing:-0.35px;">0.00</div>
<div class="t" style="left:254px;top:675.99px;font-size:13px;line-height:13px;color:#333;">7</div>
<div class="t" style="left:291px;top:676.84px;font-size:12px;line-height:12px;color:#3c8dbc;">SL0036</div>
<div class="t" style="left:430px;top:675.99px;font-size:13px;line-height:13px;color:#333;letter-spacing:-0.35px;">07-09-2019</div>
<div class="t" style="left:528px;top:675.99px;font-size:13px;line-height:13px;color:#333;">Walk-in customer</div>
<div class="t" style="left:671px;top:675.99px;font-size:13px;line-height:13px;color:#333;">Lifebuoy</div>
<div class="t" style="left:773px;top:675.99px;font-size:13px;line-height:13px;color:#333;">1</div>
<div class="t" style="left:440px;width:600px;text-align:right;top:675.99px;font-size:13px;line-height:13px;color:#333;letter-spacing:-0.35px;">38008.00</div>
<div class="t" style="left:588px;width:600px;text-align:right;top:675.99px;font-size:13px;line-height:13px;color:#333;letter-spacing:-0.35px;">38008.00</div>
<div class="t" style="left:725px;width:600px;text-align:right;top:675.99px;font-size:13px;line-height:13px;color:#333;letter-spacing:-0.35px;">0.00</div>
<div class="t" style="left:254px;top:712.99px;font-size:13px;line-height:13px;color:#333;">8</div>
<div class="t" style="left:291px;top:713.84px;font-size:12px;line-height:12px;color:#3c8dbc;">SL0035</div>
<div class="t" style="left:430px;top:712.99px;font-size:13px;line-height:13px;color:#333;letter-spacing:-0.35px;">07-09-2019</div>
<div class="t" style="left:528px;top:712.99px;font-size:13px;line-height:13px;color:#333;">Walk-in customer</div>
<div class="t" style="left:671px;top:712.99px;font-size:13px;line-height:13px;color:#333;">Lifebuoy</div>
<div class="t" style="left:773px;top:712.99px;font-size:13px;line-height:13px;color:#333;">1</div>
<div class="t" style="left:440px;width:600px;text-align:right;top:712.99px;font-size:13px;line-height:13px;color:#333;letter-spacing:-0.35px;">58.00</div>
<div class="t" style="left:588px;width:600px;text-align:right;top:712.99px;font-size:13px;line-height:13px;color:#333;letter-spacing:-0.35px;">58.00</div>
<div class="t" style="left:725px;width:600px;text-align:right;top:712.99px;font-size:13px;line-height:13px;color:#333;letter-spacing:-0.35px;">0.00</div>
<div class="t" style="left:254px;top:749.99px;font-size:13px;line-height:13px;color:#333;">9</div>
<div class="t" style="left:291px;top:750.84px;font-size:12px;line-height:12px;color:#3c8dbc;">SL0034</div>
<div class="t" style="left:430px;top:749.99px;font-size:13px;line-height:13px;color:#333;letter-spacing:-0.35px;">07-09-2019</div>
<div class="t" style="left:528px;top:749.99px;font-size:13px;line-height:13px;color:#333;">Walk-in customer</div>
<div class="t" style="left:671px;top:749.99px;font-size:13px;line-height:13px;color:#333;">Lifebuoy</div>
<div class="t" style="left:773px;top:749.99px;font-size:13px;line-height:13px;color:#333;">1</div>
<div class="t" style="left:440px;width:600px;text-align:right;top:749.99px;font-size:13px;line-height:13px;color:#333;letter-spacing:-0.35px;">28802.00</div>
<div class="t" style="left:588px;width:600px;text-align:right;top:749.99px;font-size:13px;line-height:13px;color:#333;letter-spacing:-0.35px;">28802.00</div>
<div class="t" style="left:725px;width:600px;text-align:right;top:749.99px;font-size:13px;line-height:13px;color:#333;letter-spacing:-0.35px;">0.00</div>
<div class="t" style="left:254px;top:786.99px;font-size:13px;line-height:13px;color:#333;">10</div>
<div class="t" style="left:291px;top:787.84px;font-size:12px;line-height:12px;color:#3c8dbc;">SL0033</div>
<div class="t" style="left:430px;top:786.99px;font-size:13px;line-height:13px;color:#333;letter-spacing:-0.35px;">07-09-2019</div>
<div class="t" style="left:528px;top:786.99px;font-size:13px;line-height:13px;color:#333;">Chris Moris</div>
<div class="t" style="left:671px;top:786.99px;font-size:13px;line-height:13px;color:#333;">Lifebuoy</div>
<div class="t" style="left:773px;top:786.99px;font-size:13px;line-height:13px;color:#333;">1</div>
<div class="t" style="left:440px;width:600px;text-align:right;top:786.99px;font-size:13px;line-height:13px;color:#333;letter-spacing:-0.35px;">22140.00</div>
<div class="t" style="left:588px;width:600px;text-align:right;top:786.99px;font-size:13px;line-height:13px;color:#333;letter-spacing:-0.35px;">22140.00</div>
<div class="t" style="left:725px;width:600px;text-align:right;top:786.99px;font-size:13px;line-height:13px;color:#333;letter-spacing:-0.35px;">0.00</div>
<div class="t" style="left:254px;top:823.99px;font-size:13px;line-height:13px;color:#333;">11</div>
<div class="t" style="left:291px;top:824.84px;font-size:12px;line-height:12px;color:#3c8dbc;">SL0032</div>
<div class="t" style="left:430px;top:823.99px;font-size:13px;line-height:13px;color:#333;letter-spacing:-0.35px;">07-09-2019</div>
<div class="t" style="left:528px;top:823.99px;font-size:13px;line-height:13px;color:#333;">Walk-in customer</div>
<div class="t" style="left:671px;top:823.99px;font-size:13px;line-height:13px;color:#333;">Lifebuoy</div>
<div class="t" style="left:773px;top:823.99px;font-size:13px;line-height:13px;color:#333;">1</div>
<div class="t" style="left:440px;width:600px;text-align:right;top:823.99px;font-size:13px;line-height:13px;color:#333;letter-spacing:-0.35px;">22058.00</div>
<div class="t" style="left:588px;width:600px;text-align:right;top:823.99px;font-size:13px;line-height:13px;color:#333;letter-spacing:-0.35px;">22058.00</div>
<div class="t" style="left:725px;width:600px;text-align:right;top:823.99px;font-size:13px;line-height:13px;color:#333;letter-spacing:-0.35px;">0.00</div>
<div class="t" style="left:254px;top:860.99px;font-size:13px;line-height:13px;color:#333;">12</div>
<div class="t" style="left:291px;top:861.84px;font-size:12px;line-height:12px;color:#3c8dbc;">SL0031</div>
<div class="t" style="left:430px;top:860.99px;font-size:13px;line-height:13px;color:#333;letter-spacing:-0.35px;">07-09-2019</div>
<div class="t" style="left:528px;top:860.99px;font-size:13px;line-height:13px;color:#333;">Walk-in customer</div>
<div class="t" style="left:671px;top:860.99px;font-size:13px;line-height:13px;color:#333;">Lifebuoy</div>
<div class="t" style="left:773px;top:860.99px;font-size:13px;line-height:13px;color:#333;">1</div>
<div class="t" style="left:440px;width:600px;text-align:right;top:860.99px;font-size:13px;line-height:13px;color:#333;letter-spacing:-0.35px;">22058.00</div>
<div class="t" style="left:588px;width:600px;text-align:right;top:860.99px;font-size:13px;line-height:13px;color:#333;letter-spacing:-0.35px;">22058.00</div>
<div class="t" style="left:725px;width:600px;text-align:right;top:860.99px;font-size:13px;line-height:13px;color:#333;letter-spacing:-0.35px;">0.00</div>
<div class="t" style="left:301px;width:600px;text-align:right;top:897.99px;font-size:13px;line-height:13px;color:#333;font-weight:bold;">Total :</div>
<div class="t" style="left:440px;width:600px;text-align:right;top:897.99px;font-size:13px;line-height:13px;color:#333;font-weight:bold;">264867.00</div>
<div class="t" style="left:588px;width:600px;text-align:right;top:897.99px;font-size:13px;line-height:13px;color:#333;font-weight:bold;">239922.00</div>
<div class="t" style="left:725px;width:600px;text-align:right;top:897.99px;font-size:13px;line-height:13px;color:#333;font-weight:bold;">24945.00</div>
<div class="r" style="left:230px;top:948px;width:1119px;height:51px;background:#fff;"></div>
<div class="r" style="left:230px;top:948px;width:1119px;height:1px;background:#d2d6de;"></div>
<div class="t" style="left:245.6px;top:967.99px;font-size:13px;line-height:13px;color:#444;font-weight:bold;letter-spacing:-0.06px;">Copyright &copy; 2019 All rights reserved.</div>
<div class="t" style="left:733.8px;width:600px;text-align:right;top:967.99px;font-size:13px;line-height:13px;color:#444;font-weight:bold;letter-spacing:0.1px;">Ultimate Inventory with POS -v1.3.9.1</div>
</body></html>
